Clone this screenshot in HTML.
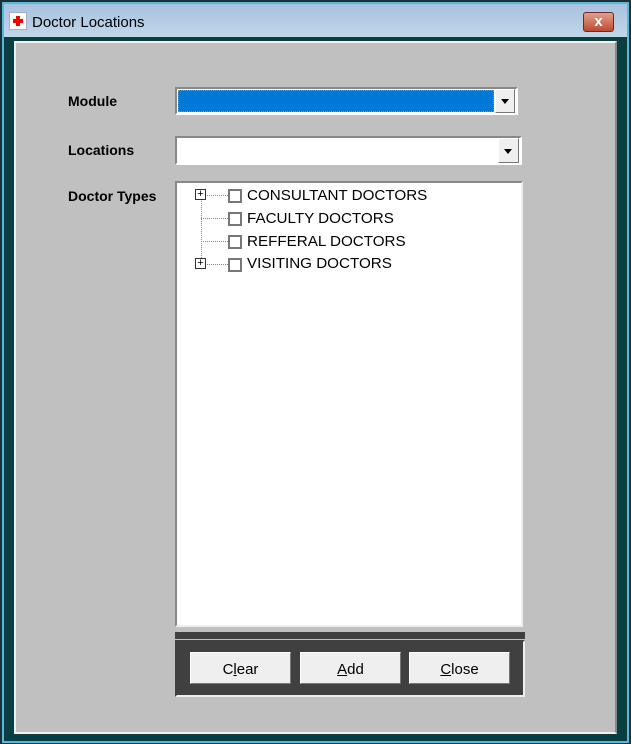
<!DOCTYPE html>
<html><head><style>
*{margin:0;padding:0;box-sizing:border-box}
body{width:631px;height:744px;background:#1f2f3a;position:relative;overflow:hidden;font-family:"Liberation Sans",Arial,sans-serif}
.a{position:absolute}
.lbl{font-weight:bold;font-size:14px;color:#000}
.btn{position:absolute;top:652px;height:32px;width:101px;background:#efefef;border:1px solid #fff;border-right-color:#777;border-bottom-color:#777;font-size:15px;text-align:center;line-height:34px;color:#000}
.arr{position:absolute;width:0;height:0;border-left:4px solid transparent;border-right:4px solid transparent;border-top:5px solid #000}
.cb{position:absolute;width:14px;height:14px;border:2px solid #777;background:#fff}
.t{position:absolute;font-size:15.2px;color:#000}
.pl{position:absolute;width:11px;height:11px;border:1px solid #333;background:#fff;font-size:11px;line-height:8px;text-align:center}
</style></head><body>
<div class="a" style="left:2px;top:2px;width:627px;height:741px;background:#55b8dc"></div>
<div class="a" style="left:4px;top:4px;width:623px;height:737px;background:#0a3f42"></div>
<div class="a" style="left:4px;top:4px;width:623px;height:33px;background:linear-gradient(#a8c2dc,#c0d6ea)"></div>
<div class="a" style="left:9px;top:12px;width:18px;height:18px;background:#fff;border:1px solid #aac"></div>
<div class="a" style="left:13px;top:19px;width:10px;height:4px;background:#e00"></div>
<div class="a" style="left:16px;top:16px;width:4px;height:10px;background:#e00"></div>
<div class="a" style="left:32px;top:14px;font-size:15px;color:#000">Doctor Locations</div>
<div class="a" style="left:583px;top:12px;width:31px;height:20px;border-radius:3px;background:linear-gradient(#e0a090,#c04a30);border:1px solid #6b2a20;color:#fff;font-weight:bold;text-align:center;font-size:15px;line-height:17px">x</div>
<div class="a" style="left:14px;top:41px;width:603px;height:693px;background:#c0c0c0;border:2px solid #f0f0f0;border-right-color:#888;border-bottom-color:#f0f0f0"></div>
<div class="lbl a" style="left:68px;top:93px">Module</div>
<div class="lbl a" style="left:68px;top:142px">Locations</div>
<div class="lbl a" style="left:68px;top:188px">Doctor Types</div>
<div class="a" style="left:175px;top:87px;width:343px;height:28px;background:#fff;border:2px solid #888;border-right-color:#fff;border-bottom-color:#fff"></div>
<div class="a" style="left:178px;top:90px;width:316px;height:22px;background:#0078d7;border:1px dotted #c08040"></div>
<div class="a" style="left:495px;top:89px;width:20px;height:24px;background:#efefef;border:1px solid #fff;border-right-color:#777;border-bottom-color:#777"></div>
<div class="arr" style="left:501px;top:99px"></div>
<div class="a" style="left:175px;top:136px;width:347px;height:29px;background:#fff;border:2px solid #888;border-right-color:#fff;border-bottom-color:#fff"></div>
<div class="a" style="left:498px;top:138px;width:21px;height:25px;background:#efefef;border:1px solid #fff;border-right-color:#777;border-bottom-color:#777"></div>
<div class="arr" style="left:504px;top:149px"></div>
<div class="a" style="left:175px;top:181px;width:348px;height:446px;background:#fff;border:2px solid #888;border-right-color:#eee;border-bottom-color:#eee"></div>
<div class="a" style="left:201px;top:195px;height:69px;border-left:1px dotted #888"></div>
<div class="a" style="left:201px;top:195px;width:27px;border-top:1px dotted #888"></div>
<div class="a" style="left:201px;top:218px;width:27px;border-top:1px dotted #888"></div>
<div class="a" style="left:201px;top:241px;width:27px;border-top:1px dotted #888"></div>
<div class="a" style="left:201px;top:264px;width:27px;border-top:1px dotted #888"></div>
<div class="pl" style="left:195px;top:189px">+</div>
<div class="pl" style="left:195px;top:258px">+</div>
<div class="cb" style="left:228px;top:189px"></div><div class="t" style="left:247px;top:187px">CONSULTANT DOCTORS</div>
<div class="cb" style="left:228px;top:212px"></div><div class="t" style="left:247px;top:210px">FACULTY DOCTORS</div>
<div class="cb" style="left:228px;top:235px"></div><div class="t" style="left:247px;top:233px">REFFERAL DOCTORS</div>
<div class="cb" style="left:228px;top:258px"></div><div class="t" style="left:247px;top:255px">VISITING DOCTORS</div>
<div class="a" style="left:175px;top:632px;width:350px;height:7px;background:#404040"></div>
<div class="a" style="left:175px;top:640px;width:350px;height:57px;background:#404040;border:2px solid #404040;border-right-color:#eee;border-bottom-color:#eee"></div>
<div class="btn" style="left:190px">C<u>l</u>ear</div>
<div class="btn" style="left:300px"><u>A</u>dd</div>
<div class="btn" style="left:409px"><u>C</u>lose</div>
</body></html>
